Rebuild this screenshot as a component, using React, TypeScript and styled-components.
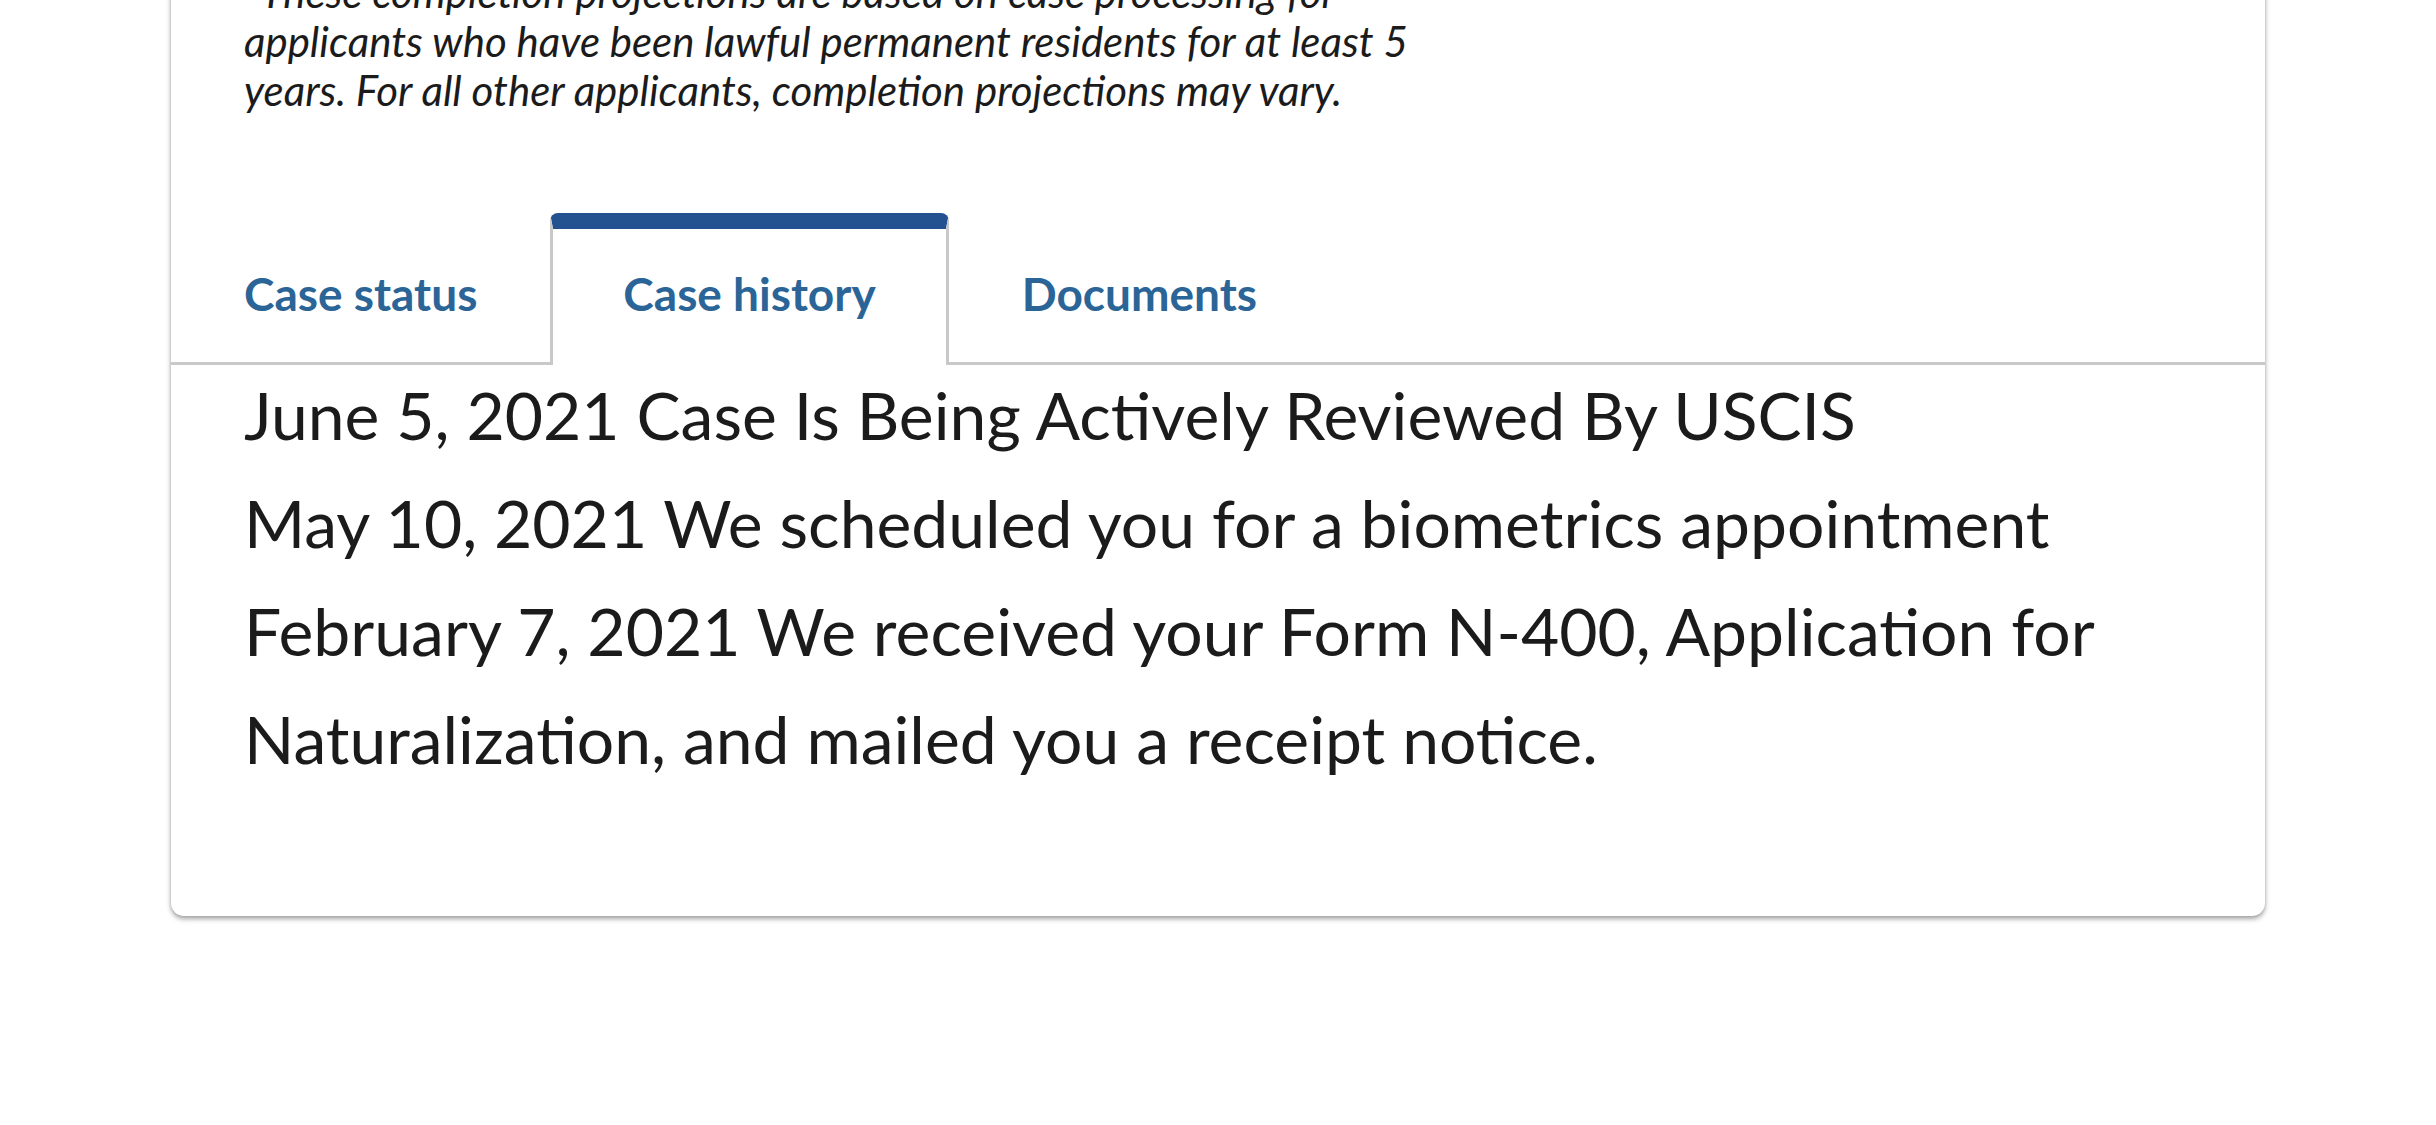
import React from "react";
import styled, { createGlobalStyle, css } from "styled-components";

const GlobalStyle = createGlobalStyle`
  html, body {
    margin: 0;
    padding: 0;
    background: #ffffff;
  }
  body {
    font-family: Lato, "Liberation Sans", sans-serif;
    color: #1b1b1b;
    overflow: hidden;
  }
`;

const Page = styled.main`
  width: 100%;
  min-height: 1125px;
  display: flex;
  justify-content: center;
`;

const Card = styled.section`
  width: 2094px;
  margin-top: -32px;
  align-self: flex-start;
  background: #ffffff;
  border-radius: 0 0 13px 13px;
  box-shadow: 0 3px 5px rgba(0, 0, 0, 0.35), 0 0 3px rgba(0, 0, 0, 0.12);
  padding-bottom: 123px;
`;

const Footnote = styled.p`
  margin: 0;
  padding: 0 73px;
  font-style: italic;
  font-size: 42px;
  line-height: 49px;
  color: #1b1b1b;
  white-space: nowrap;
`;

const TabList = styled.div`
  display: flex;
  align-items: flex-end;
  margin-top: 98px;
  border-bottom: 3px solid #c9c9c9;
`;

const activeTab = css`
  background: #ffffff;
  border-color: #c9c9c9;
  border-top-color: #24518f;
`;

const Tab = styled.button<{ $active?: boolean }>`
  appearance: none;
  background: transparent;
  margin: 0 0 -3px;
  padding: 42px 70px 48px;
  border: 3px solid transparent;
  border-top: 16px solid transparent;
  border-bottom: none;
  border-radius: 8px 8px 0 0;
  font-family: Lato, "Liberation Sans", sans-serif;
  font-weight: 700;
  font-size: 46px;
  line-height: 46px;
  color: #2b6597;
  cursor: pointer;
  ${({ $active }) => $active && activeTab}
`;

const History = styled.ol`
  list-style: none;
  margin: -4px 0 0;
  padding: 0 73px;
`;

const Event = styled.li`
  font-size: 66px;
  line-height: 108px;
  color: #1b1b1b;
`;

const events = [
  { date: "June 5, 2021", text: "Case Is Being Actively Reviewed By USCIS" },
  { date: "May 10, 2021", text: "We scheduled you for a biometrics appointment" },
  {
    date: "February 7, 2021",
    text: "We received your Form N-400, Application for Naturalization, and mailed you a receipt notice.",
  },
];

const tabs = ["Case status", "Case history", "Documents"];

export default function App() {
  return (
    <>
      <GlobalStyle />
      <Page>
        <Card>
          <Footnote>
            *These completion projections are based on case processing for
            <br />
            applicants who have been lawful permanent residents for at least 5
            <br />
            years. For all other applicants, completion projections may vary.
          </Footnote>
          <TabList role="tablist">
            {tabs.map((t) => (
              <Tab key={t} role="tab" $active={t === "Case history"} aria-selected={t === "Case history"}>
                {t}
              </Tab>
            ))}
          </TabList>
          <History>
            {events.map((e) => (
              <Event key={e.date}>
                {e.date} {e.text}
              </Event>
            ))}
          </History>
        </Card>
      </Page>
    </>
  );
}
